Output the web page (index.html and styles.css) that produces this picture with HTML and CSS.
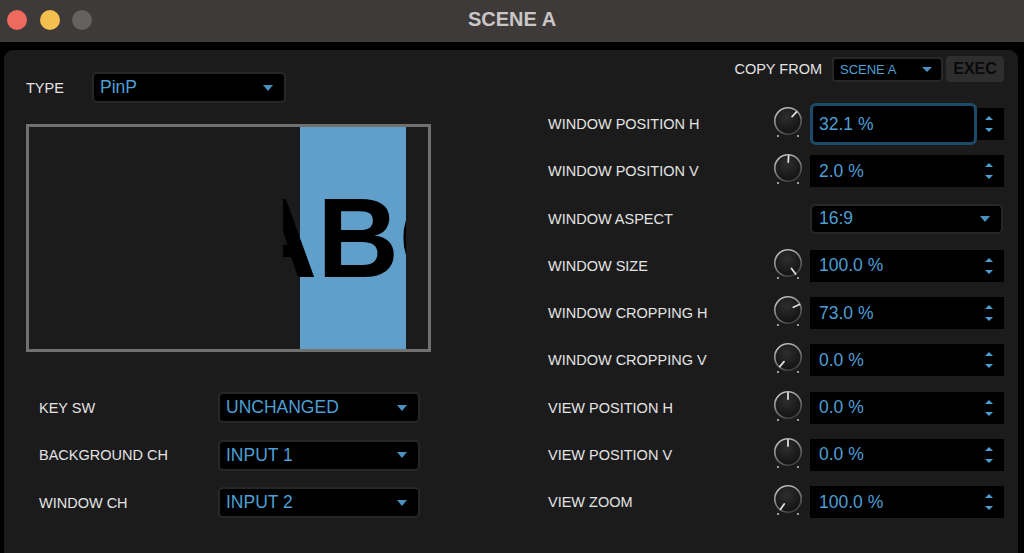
FILE: index.html
```html
<!DOCTYPE html>
<html>
<head>
<meta charset="utf-8">
<title>SCENE A</title>
<link rel="stylesheet" href="styles.css">
</head>
<body>
<svg class="defs" width="0" height="0" aria-hidden="true">
  <defs>
    <radialGradient id="kfill" cx="0.45" cy="0.35" r="0.7">
      <stop offset="0" stop-color="#2e2e2e"/>
      <stop offset="1" stop-color="#101010"/>
    </radialGradient>
    <linearGradient id="krim" x1="0.2" y1="0" x2="0.7" y2="1">
      <stop offset="0" stop-color="#c4c4c4"/>
      <stop offset="0.5" stop-color="#808080"/>
      <stop offset="1" stop-color="#3a3a3a"/>
    </linearGradient>
  </defs>
</svg>

<div class="titlebar">
  <div class="lights">
    <span class="light red"></span>
    <span class="light yellow"></span>
    <span class="light gray"></span>
  </div>
  <div class="title">SCENE A</div>
  <div></div>
</div>

<div class="main">
  <div class="panel">
    <div class="left">
      <div class="type-row">
        <span class="lbl type-lbl">TYPE</span>
        <div class="select type-select"><span>PinP</span><i class="caret"></i></div>
      </div>
      <div class="preview">
        <div class="clip">
          <div class="window"><span class="abc">ABC</span></div>
        </div>
      </div>
      <div class="opts">
        <div class="opt"><span class="lbl">KEY SW</span><div class="select"><span>UNCHANGED</span><i class="caret"></i></div></div>
        <div class="opt"><span class="lbl">BACKGROUND CH</span><div class="select"><span>INPUT 1</span><i class="caret"></i></div></div>
        <div class="opt"><span class="lbl">WINDOW CH</span><div class="select"><span>INPUT 2</span><i class="caret"></i></div></div>
      </div>
    </div>

    <div class="right">
      <div class="copy-row">
        <span class="lbl copy-lbl">COPY FROM</span>
        <div class="select copy-select"><span>SCENE A</span><i class="caret small"></i></div>
        <div class="exec">EXEC</div>
      </div>

      <div class="params">
        <span class="lbl">WINDOW POSITION H</span>
        <svg class="knob" width="30" height="34" viewBox="0 0 30 34"><circle cx="15" cy="14" r="13.2" fill="url(#kfill)" stroke="url(#krim)" stroke-width="1.6"/><circle cx="5" cy="29" r="1.1" fill="#bbb"/><circle cx="25" cy="29" r="1.1" fill="#bbb"/><line x1="19.1" y1="9.6" x2="23.5" y2="4.9" stroke="#ddd" stroke-width="1.8" stroke-linecap="round"/></svg>
        <div class="field focus"><span class="val">32.1 %</span><span class="spin"><i class="up"></i><i class="down"></i></span></div>

        <span class="lbl">WINDOW POSITION V</span>
        <svg class="knob" width="30" height="34" viewBox="0 0 30 34"><circle cx="15" cy="14" r="13.2" fill="url(#kfill)" stroke="url(#krim)" stroke-width="1.6"/><circle cx="5" cy="29" r="1.1" fill="#bbb"/><circle cx="25" cy="29" r="1.1" fill="#bbb"/><line x1="15.3" y1="8" x2="15.6" y2="1.8" stroke="#ddd" stroke-width="1.8" stroke-linecap="round"/></svg>
        <div class="field"><span class="val">2.0 %</span><span class="spin"><i class="up"></i><i class="down"></i></span></div>

        <span class="lbl">WINDOW ASPECT</span>
        <span></span>
        <div class="select aspect"><span>16:9</span><i class="caret"></i></div>

        <span class="lbl">WINDOW SIZE</span>
        <svg class="knob" width="30" height="34" viewBox="0 0 30 34"><circle cx="15" cy="14" r="13.2" fill="url(#kfill)" stroke="url(#krim)" stroke-width="1.6"/><circle cx="5" cy="29" r="1.1" fill="#bbb"/><circle cx="25" cy="29" r="1.1" fill="#bbb"/><line x1="18.5" y1="19.5" x2="22.6" y2="25" stroke="#ddd" stroke-width="1.8" stroke-linecap="round"/></svg>
        <div class="field"><span class="val">100.0 %</span><span class="spin"><i class="up"></i><i class="down"></i></span></div>

        <span class="lbl">WINDOW CROPPING H</span>
        <svg class="knob" width="30" height="34" viewBox="0 0 30 34"><circle cx="15" cy="14" r="13.2" fill="url(#kfill)" stroke="url(#krim)" stroke-width="1.6"/><circle cx="5" cy="29" r="1.1" fill="#bbb"/><circle cx="25" cy="29" r="1.1" fill="#bbb"/><line x1="20.3" y1="11.2" x2="26.4" y2="8.5" stroke="#ddd" stroke-width="1.8" stroke-linecap="round"/></svg>
        <div class="field"><span class="val">73.0 %</span><span class="spin"><i class="up"></i><i class="down"></i></span></div>

        <span class="lbl">WINDOW CROPPING V</span>
        <svg class="knob" width="30" height="34" viewBox="0 0 30 34"><circle cx="15" cy="14" r="13.2" fill="url(#kfill)" stroke="url(#krim)" stroke-width="1.6"/><circle cx="5" cy="29" r="1.1" fill="#bbb"/><circle cx="25" cy="29" r="1.1" fill="#bbb"/><line x1="11" y1="18.6" x2="6.8" y2="23.6" stroke="#ddd" stroke-width="1.8" stroke-linecap="round"/></svg>
        <div class="field"><span class="val">0.0 %</span><span class="spin"><i class="up"></i><i class="down"></i></span></div>

        <span class="lbl">VIEW POSITION H</span>
        <svg class="knob" width="30" height="34" viewBox="0 0 30 34"><circle cx="15" cy="14" r="13.2" fill="url(#kfill)" stroke="url(#krim)" stroke-width="1.6"/><circle cx="5" cy="29" r="1.1" fill="#bbb"/><circle cx="25" cy="29" r="1.1" fill="#bbb"/><line x1="15" y1="8" x2="15" y2="1.8" stroke="#ddd" stroke-width="1.8" stroke-linecap="round"/></svg>
        <div class="field"><span class="val">0.0 %</span><span class="spin"><i class="up"></i><i class="down"></i></span></div>

        <span class="lbl">VIEW POSITION V</span>
        <svg class="knob" width="30" height="34" viewBox="0 0 30 34"><circle cx="15" cy="14" r="13.2" fill="url(#kfill)" stroke="url(#krim)" stroke-width="1.6"/><circle cx="5" cy="29" r="1.1" fill="#bbb"/><circle cx="25" cy="29" r="1.1" fill="#bbb"/><line x1="15" y1="8" x2="15" y2="1.8" stroke="#ddd" stroke-width="1.8" stroke-linecap="round"/></svg>
        <div class="field"><span class="val">0.0 %</span><span class="spin"><i class="up"></i><i class="down"></i></span></div>

        <span class="lbl">VIEW ZOOM</span>
        <svg class="knob" width="30" height="34" viewBox="0 0 30 34"><circle cx="15" cy="14" r="13.2" fill="url(#kfill)" stroke="url(#krim)" stroke-width="1.6"/><circle cx="5" cy="29" r="1.1" fill="#bbb"/><circle cx="25" cy="29" r="1.1" fill="#bbb"/><line x1="11.2" y1="19" x2="7.4" y2="24.4" stroke="#ddd" stroke-width="1.8" stroke-linecap="round"/></svg>
        <div class="field"><span class="val">100.0 %</span><span class="spin"><i class="up"></i><i class="down"></i></span></div>
      </div>
    </div>
  </div>
</div>
</body>
</html>
```

FILE: styles.css
```css
* {
  box-sizing: border-box;
  margin: 0;
  padding: 0;
}

html, body {
  background: #000;
}

body {
  width: 1024px;
  height: 553px;
  overflow: hidden;
  font-family: "Liberation Sans", Arial, sans-serif;
}

.defs {
  position: absolute;
  width: 0;
  height: 0;
}

/* title bar */
.titlebar {
  height: 42px;
  background: #3f3a3a;
  display: grid;
  grid-template-columns: 1fr auto 1fr;
  align-items: start;
}

.lights {
  display: flex;
  gap: 12.5px;
  padding: 9.5px 0 0 7px;
}

.light {
  width: 20px;
  height: 20px;
  border-radius: 50%;
}

.red { background: #ee6a5e; }
.yellow { background: #f5bf4f; }
.gray { background: #65615f; }

.title {
  font-weight: bold;
  font-size: 20px;
  line-height: 22px;
  padding-top: 7.5px;
  color: #cbc6c6;
}

/* main panel */
.main {
  padding: 8px 0 0 4px;
}

.panel {
  width: 1014px;
  height: 503px;
  background: #1b1b1b;
  border-radius: 9px 9px 0 0;
  display: flex;
}

.lbl {
  color: #e3e3e3;
  font-size: 14.5px;
  white-space: nowrap;
}

.select {
  height: 31px;
  background: #000;
  border: 2px solid #272727;
  border-radius: 5px;
  display: flex;
  align-items: center;
  justify-content: space-between;
  padding: 0 11px 0 6px;
  color: #4c9fd4;
  font-size: 17.5px;
}

.caret {
  width: 0;
  height: 0;
  border-left: 5.5px solid transparent;
  border-right: 5.5px solid transparent;
  border-top: 6px solid #4a90c0;
}

.caret.small {
  border-left-width: 5px;
  border-right-width: 5px;
  border-top-width: 5px;
}

/* left column */
.left {
  width: 427px;
  padding: 22px 0 0 22px;
}

.type-row {
  display: flex;
  align-items: center;
  height: 31px;
}

.type-lbl {
  width: 66px;
}

.type-select {
  width: 194px;
}

.preview {
  margin-top: 21px;
  width: 405px;
  height: 228px;
  border: 3px solid #707070;
  background: #1b1b1b;
  overflow: hidden;
  display: flex;
  padding-left: 254px;
}

.clip {
  display: flex;
  width: 123px;
  padding-left: 17px;
  overflow: hidden;
}

.window {
  width: 106px;
  background: #5f9fc9;
  display: flex;
  align-items: center;
  justify-content: center;
  padding-left: 10px;
}

.abc {
  font-weight: bold;
  font-size: 113px;
  line-height: 1;
  color: #000;
  white-space: nowrap;
}

.opts {
  margin-top: 40px;
  padding-left: 13px;
  display: flex;
  flex-direction: column;
  gap: 16.5px;
}

.opt {
  display: flex;
  align-items: center;
}

.opt .lbl {
  width: 179px;
}

.opt .select {
  width: 202px;
}

/* right column */
.right {
  flex: 1;
  margin-left: 117px;
  padding: 6px 14px 0 0;
}

.copy-row {
  display: flex;
  justify-content: flex-end;
  align-items: center;
  height: 26px;
}

.copy-lbl {
  margin-right: 10px;
}

.copy-select {
  width: 111px;
  height: 25px;
  font-size: 13px;
  border-radius: 4px;
  padding: 0 9px 0 6px;
}

.exec {
  width: 58px;
  height: 26px;
  margin-left: 3px;
  background: #2e2e2e;
  border-radius: 4px;
  color: #0a0a0a;
  font-weight: bold;
  font-size: 16px;
  display: flex;
  align-items: center;
  justify-content: center;
}

.params {
  margin-top: 18.4px;
  display: grid;
  grid-template-columns: 225px 37px 194px;
  grid-auto-rows: 47.25px;
  align-items: center;
}

.knob {
  display: block;
}

.field {
  height: 32px;
  background: #000;
  display: flex;
  align-items: center;
  justify-content: space-between;
  padding-left: 9px;
  color: #4c9fd4;
  font-size: 17.5px;
  position: relative;
}

.field.focus::before {
  content: "";
  position: absolute;
  left: 0;
  right: 27px;
  top: -5px;
  bottom: -5px;
  background: #000;
  border: 3.5px solid #1c4a6b;
  border-radius: 6px;
}

.val {
  position: relative;
  z-index: 1;
}

.spin {
  width: 28px;
  padding-right: 3px;
  display: flex;
  flex-direction: column;
  align-items: center;
  gap: 8px;
}

.spin i {
  width: 0;
  height: 0;
  border-left: 4px solid transparent;
  border-right: 4px solid transparent;
}

.spin .up {
  border-bottom: 4.5px solid #4c9fd4;
}

.spin .down {
  border-top: 4.5px solid #4c9fd4;
}

.aspect {
  height: 30px;
  width: 193px;
  padding-left: 7px;
}
```
